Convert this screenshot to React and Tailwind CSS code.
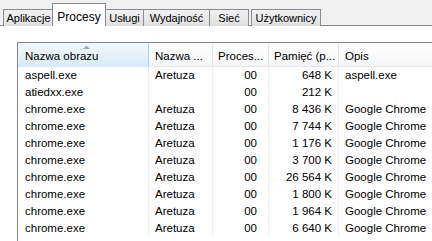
const rows = [
  ['aspell.exe', 'Aretuza', '00', '648 K', 'aspell.exe'],
  ['atiedxx.exe', '', '00', '212 K', ''],
  ['chrome.exe', 'Aretuza', '00', '8 436 K', 'Google Chrome'],
  ['chrome.exe', 'Aretuza', '00', '7 744 K', 'Google Chrome'],
  ['chrome.exe', 'Aretuza', '00', '1 176 K', 'Google Chrome'],
  ['chrome.exe', 'Aretuza', '00', '3 700 K', 'Google Chrome'],
  ['chrome.exe', 'Aretuza', '00', '26 564 K', 'Google Chrome'],
  ['chrome.exe', 'Aretuza', '00', '1 800 K', 'Google Chrome'],
  ['chrome.exe', 'Aretuza', '00', '1 964 K', 'Google Chrome'],
  ['chrome.exe', 'Aretuza', '00', '6 640 K', 'Google Chrome'],
]

const tabs = [
  { label: 'Aplikacje', w: 'w-[51px]' },
  { label: 'Procesy', w: 'w-[54px]', active: true },
  { label: 'Usługi', w: 'w-[39px]' },
  { label: 'Wydajność', w: 'w-[67px]' },
  { label: 'Sieć', w: 'w-[40px]' },
]

function Tab({ label, w, active }) {
  if (active) {
    return (
      <div
        className={`${w} h-[23px] -mx-px z-10 flex items-start justify-center pt-[4px] bg-white border border-b-0 border-[#898c95] text-[12px]`}
      >
        {label}
      </div>
    )
  }
  return (
    <div
      className={`${w} h-[17px] -mr-px flex items-center justify-center pt-px border border-b-0 border-[#898c95] bg-gradient-to-b from-[#f2f2f2] to-[#dfdfdf] text-[11px]`}
    >
      {label}
    </div>
  )
}

export default function App() {
  return (
    <div className="w-[432px] h-[241px] overflow-hidden bg-white text-black font-['Liberation_Sans',Arial,sans-serif]">
      {/* Tab strip */}
      <div className="h-[26px] bg-[#f0f0f0] border-b border-[#898c95] flex items-end pl-[3px]">
        <div className="flex items-end -mb-px">
          {tabs.map((t) => (
            <Tab key={t.label} {...t} />
          ))}
          <div className="ml-[3px]">
            <Tab label="Użytkownicy" w="w-[70px]" />
          </div>
        </div>
      </div>

      {/* Process list */}
      <div className="ml-[17px] mt-[16px] border-l border-t border-[#828790] h-[200px]">
        <div className="flex h-[24px] text-[11.5px] border-b border-[#e3e6ea]">
          <div className="w-[131px] relative flex items-center pl-[7px] pt-[5px] bg-gradient-to-b from-[#f3f9fd] to-[#d7ebf8] border-r border-[#a8d2ee]">
            <svg className="absolute left-[64px] top-[2px]" width="9" height="5" viewBox="0 0 9 5">
              <path d="M4.5 0.5 L8 4 L1 4 Z" fill="#97a8c2" />
            </svg>
            Nazwa obrazu
          </div>
          <div className="w-[64px] flex items-center pl-[6px] pt-[5px] bg-gradient-to-b from-white to-[#f5f6f7] border-r border-[#e3e5e8]">
            Nazwa ...
          </div>
          <div className="w-[56px] flex items-center pl-[5px] pt-[5px] bg-gradient-to-b from-white to-[#f5f6f7] border-r border-[#e3e5e8]">
            Proces...
          </div>
          <div className="w-[70px] flex items-center pl-[5px] pt-[5px] bg-gradient-to-b from-white to-[#f5f6f7] border-r border-[#e3e5e8]">
            Pamięć (p...
          </div>
          <div className="flex-1 flex items-center pl-[6px] pt-[5px] bg-gradient-to-b from-white to-[#f5f6f7]">
            Opis
          </div>
        </div>

        <div>
          {rows.map((r, i) => (
            <div key={i} className="flex h-[17px] items-center text-[11.5px] leading-none">
              <div className="w-[131px] h-full flex items-center pl-[7px] border-r border-[#eef2f7]">{r[0]}</div>
              <div className="w-[64px] h-full flex items-center pl-[6px] border-r border-[#eef2f7]">{r[1]}</div>
              <div className="w-[56px] h-full flex items-center justify-end pr-[11px] border-r border-[#eef2f7]">{r[2]}</div>
              <div className="w-[70px] h-full flex items-center justify-end pr-[6px] border-r border-[#eef2f7]">{r[3]}</div>
              <div className="flex-1 h-full flex items-center pl-[6px]">{r[4]}</div>
            </div>
          ))}
        </div>
      </div>
    </div>
  )
}
